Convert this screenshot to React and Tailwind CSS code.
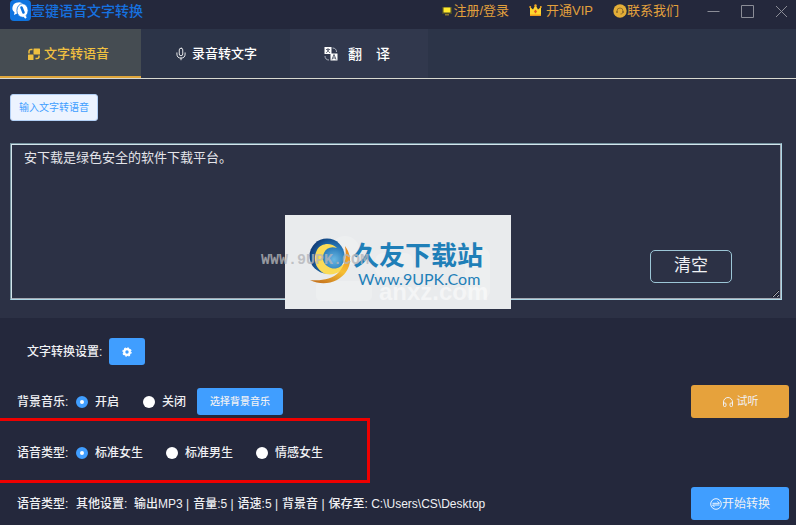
import { useState } from "react";
import { Mic, Headphones } from "lucide-react";

const AppLogo = () => (
  <svg viewBox="0 0 21 21" className="h-[21px] w-[21px]" aria-hidden="true">
    <rect width="21" height="21" rx="4" fill="#0f74e0" />
    <path d="M8 2.500a5.500 5.500 0 0 0-3.500 9.800L4 15l3-1.500h3l3-9.500a5.500 5.500 0 0 0-5-1.500z" fill="#fff" />
    <ellipse
      cx="12.500"
      cy="10.500"
      rx="5.600"
      ry="6.800"
      fill="#fff"
      stroke="#0f74e0"
      strokeWidth="0.800"
    />
    <path d="M11.500 7.500l2 5" stroke="#0f74e0" strokeWidth="2.600" strokeLinecap="round" />
    <path d="M13.500 15l2.500 3" stroke="#fff" strokeWidth="2" />
  </svg>
);

const SpeechIcon = () => (
  <svg viewBox="0 0 12 12" className="h-3 w-3" fill="none" aria-hidden="true">
    <rect x="5.500" y="0.500" width="6.500" height="6" rx="0.500" fill="#f0c040" />
    <rect x="0" y="6.500" width="5.500" height="5.500" rx="0.500" fill="#f0c040" />
    <path
      d="M4.500 1.500H3a2 2 0 0 0-2 2v2M7.500 10.500H9a2 2 0 0 0 2-2V7.500"
      stroke="#f0c040"
      strokeWidth="1.500"
    />
  </svg>
);

const TranslateIcon = () => (
  <svg viewBox="0 0 14 14" className="h-[14px] w-[14px]" aria-hidden="true">
    <path d="M8.500 1c2.600 0 4 1.500 4 4M1 9c0 2.500 1.500 4 4 4" stroke="#aab0bb" fill="none" />
    <rect x="0.500" y="0" width="7" height="7" fill="#fff" />
    <rect x="6.500" y="6.500" width="7" height="7" fill="#fff" />
    <path
      d="M2 2.500h4M4 1v1.500M5.200 2.500L2.200 6M2.800 2.500L6 6"
      stroke="#4b5263"
      strokeWidth="0.800"
    />
    <path d="M8 12.500l2-5 2 5M8.800 11h2.400" stroke="#4b5263" strokeWidth="0.900" fill="none" />
  </svg>
);

const ScreenIcon = () => (
  <svg viewBox="0 0 10 10" className="h-[10px] w-[10px]" aria-hidden="true">
    <rect x="0" y="1" width="10" height="7" fill="#4a4a26" />
    <rect x="1.500" y="1.500" width="7" height="5" fill="#ffe92e" />
    <rect x="3" y="8" width="4" height="1.500" fill="#8e7a30" />
  </svg>
);

const CrownIcon = () => (
  <svg viewBox="0 0 13 13" className="h-[13px] w-[13px]" aria-hidden="true">
    <path d="M1 3l3 2.500L6.500 1 9 5.500 12 3v9H1z" fill="#ffd52e" />
    <path d="M1 10.500h11V12H1z" fill="#f09a1c" />
    <circle cx="6.500" cy="1.500" r="1.200" fill="#f5a623" />
    <circle cx="1.200" cy="3" r="1" fill="#f5a623" />
    <circle cx="11.800" cy="3" r="1" fill="#f5a623" />
    <path d="M6.500 5.500L8 7.500 6.500 9.500 5 7.500z" fill="#e2561f" />
  </svg>
);

const SupportIcon = () => (
  <svg viewBox="0 0 14 14" className="h-[14px] w-[14px]" aria-hidden="true">
    <circle cx="7" cy="7" r="6.700" fill="#e3ae37" />
    <path
      d="M4 7.500V7a3 3 0 0 1 6 0v1c0 1.200-1 2-2.500 2"
      stroke="#8a6a2a"
      strokeWidth="0.900"
      fill="none"
    />
    <path d="M4 7v2M10 7v2" stroke="#8a6a2a" strokeWidth="1.500" />
  </svg>
);

const GearIcon = () => (
  <svg viewBox="0 0 10 10" className="h-[10px] w-[10px]" aria-hidden="true">
    <circle cx="5" cy="5" r="2.800" fill="none" stroke="#fff" strokeWidth="2.200" />
    <circle
      cx="5"
      cy="5"
      r="4.100"
      fill="none"
      stroke="#fff"
      strokeWidth="1.200"
      strokeDasharray="1.700 1.500"
    />
  </svg>
);

const ConvertIcon = () => (
  <svg
    viewBox="0 0 12 12"
    className="h-3 w-3"
    fill="none"
    stroke="#fff"
    strokeWidth="0.900"
    aria-hidden="true"
  >
    <circle cx="6" cy="6" r="5.300" />
    <path d="M2.500 5.300h7L7.500 3.300M9.500 7h-7l2 2" />
  </svg>
);

const WindowIcon = ({ d }) => (
  <svg
    viewBox="0 0 13 13"
    className="h-[13px] w-[13px]"
    fill="none"
    stroke="currentColor"
    aria-hidden="true"
  >
    <path d={d} />
  </svg>
);

const SiteLogo = () => (
  <svg viewBox="0 0 226 94" className="h-full w-full" aria-hidden="true">
    <defs>
      <radialGradient id="globe" cx="0.700" cy="0.600" r="0.750">
        <stop offset="0" stopColor="#6ab8e2" />
        <stop offset="0.500" stopColor="#2577b8" />
        <stop offset="1" stopColor="#0d3570" />
      </radialGradient>
      <linearGradient id="gold" x1="0.800" y1="0" x2="0.300" y2="1">
        <stop offset="0" stopColor="#e8861c" />
        <stop offset="0.550" stopColor="#f6bf34" />
        <stop offset="1" stopColor="#c9781f" />
      </linearGradient>
    </defs>
    <g fill="#fff" opacity="0.200">
      <circle cx="60" cy="36" r="15" />
      <rect x="31" y="66" width="56" height="20" rx="5" />
      <rect x="90" y="38" width="38" height="24" rx="8" />
      <rect x="180" y="32" width="25" height="53" rx="9" />
    </g>
    <circle cx="42" cy="41" r="17.500" fill="url(#globe)" />
    <path
      d="M52 33C46 27 36 28 32 35c-5 9-1 21 9 24 9 2 18-3 20-13-4 6-10 9-15 7-7-2-10-9-7-15 2-5 7-7 13-5z"
      fill="#fadb57"
    />
    <path
      d="M60 31c6 8 7 18 1 26-7 10-22 15-36 8 12 1 22-1 28-7 7-7 9-16 7-27z"
      fill="url(#gold)"
    />
  </svg>
);

const TABS = [
  { id: "speech", label: "文字转语音", icon: <SpeechIcon />, size: "w-[141px] gap-1 pr-1" },
  {
    id: "record",
    label: "录音转文字",
    icon: <Mic size={14} strokeWidth={1.5} />,
    size: "w-[149px] gap-1",
  },
  {
    id: "translate",
    label: "翻\u3000译",
    icon: <TranslateIcon />,
    size: "w-[138px] gap-[10px] bg-[#31384d] pr-1 text-sm",
  },
];

const VOICES = ["标准女生", "标准男生", "情感女生"];

const Radio = ({ name, label, checked, onChange }) => (
  <label className="flex items-center gap-[7px]">
    <input
      type="radio"
      name={name}
      checked={checked}
      onChange={onChange}
      className="h-3 w-3 appearance-none rounded-full border-[#409eff] bg-white checked:border-4"
    />
    {label}
  </label>
);

const App = () => {
  const [tab, setTab] = useState("speech");
  const [text, setText] = useState("安下载是绿色安全的软件下载平台。");
  const [music, setMusic] = useState("开启");
  const [voice, setVoice] = useState("标准女生");

  return (
    <div className="flex min-h-screen flex-col overflow-hidden bg-[#24283c] font-['Liberation_Sans','Noto_Sans_CJK_SC',sans-serif] text-xs text-[#f0f1f4]">
      {/* Title bar */}
      <header className="flex h-[29px] items-start justify-between pr-2 pl-[10px]">
        <div className="flex h-[21px] items-center text-sm font-medium text-[#1672e0]">
          <AppLogo />
          <h1>壹键语音文字转换</h1>
        </div>
        <div className="flex h-[22px] items-center text-[13px] text-[#e2a03c]">
          <nav className="flex items-center gap-5">
            <a href="#login" className="flex items-center gap-px">
              <ScreenIcon />
              注册/登录
            </a>
            <a href="#vip" className="flex items-center gap-1">
              <CrownIcon />
              开通VIP
            </a>
            <a href="#contact" className="flex items-center">
              <SupportIcon />
              联系我们
            </a>
          </nav>
          <div className="ml-7 flex items-center gap-[21px] text-[#8b8d97]">
            <button aria-label="最小化">
              <WindowIcon d="M0.500 6.500h12" />
            </button>
            <button aria-label="最大化">
              <WindowIcon d="M0.500 0.500h12v12h-12z" />
            </button>
            <button aria-label="关闭">
              <WindowIcon d="M1 1l11 11M12 1L1 12" />
            </button>
          </div>
        </div>
      </header>

      {/* Tabs */}
      <nav className="flex h-[50px] border-b border-[#d8d9d0] bg-[#2c3448] text-[13px] font-medium">
        {TABS.map((item) => (
          <button
            key={item.id}
            onClick={() => setTab(item.id)}
            className={`flex items-center justify-center ${item.size} ${
              tab === item.id
                ? "bg-[#454c52] text-[#f0c040] shadow-[inset_0_-2px_0_#e0a63a]"
                : "text-white"
            }`}
          >
            {item.icon}
            <span>{item.label}</span>
          </button>
        ))}
      </nav>

      {/* Text input */}
      <section className="relative bg-[#2c3145] pt-[15px] pr-[14px] pb-[18px] pl-[10px]">
        <button className="flex h-[27px] items-center rounded-[3px] border border-[#b3d0f5] bg-[#ecf3ff] px-2 text-[10px] text-[#409eff]">
          输入文字转语音
        </button>
        <div className="relative mt-[22px] border border-[#add8e6] border-t-[#73909c] border-l-[#73909c]">
          <textarea
            aria-label="输入文字"
            value={text}
            onChange={(e) => setText(e.target.value)}
            className="block h-[155px] w-full border border-[#a3a8b2] border-t-[#d4e6ec] border-l-[#d4e6ec] bg-transparent px-3 py-1 text-[13px] leading-[18px] text-[#e4e5ea] outline-none"
          />
          <button
            onClick={() => setText("")}
            className="absolute right-[49px] bottom-4 h-[33px] w-[82px] rounded-[5px] border border-[#9cc6d6] text-[17px]"
          >
            清空
          </button>
        </div>

        {/* Site banner */}
        <div className="pointer-events-none absolute top-[136px] left-1/2 h-[94px] w-[226px] -translate-x-1/2 bg-[#e9ebed]">
          <SiteLogo />
          <span className="absolute top-[65px] left-[94px] text-[24px] leading-6 font-bold text-white/50">
            anxz.com
          </span>
          <span className="absolute top-[25px] left-[68px] text-[26px] leading-8 font-bold whitespace-nowrap text-[#1f7fb8]">
            久友下载站
          </span>
          <span className="absolute top-[54px] left-[73px] font-['Lato',sans-serif] text-[16px] leading-5 text-[#1f7fb8]">
            Www.9UPK.Com
          </span>
          <span className="absolute top-[37px] -left-6 font-['Liberation_Mono',monospace] text-[15px] leading-[18px] font-bold text-[#b4b5b9]/80">
            WWW.9UPK.COM
          </span>
        </div>
      </section>

      {/* Settings */}
      <main className="flex flex-col pt-5 pr-[7px] font-medium">
        <div className="flex h-[27px] items-center gap-[7px] pl-[27px]">
          <span>文字转换设置:</span>
          <button
            aria-label="设置"
            className="flex h-[27px] w-9 items-center justify-center rounded-[3px] bg-[#409eff]"
          >
            <GearIcon />
          </button>
        </div>

        <div className="mt-5 flex h-[33px] items-center justify-between pl-[17px]">
          <div className="flex items-center">
            <span id="music-label" className="w-[59px]">
              背景音乐:
            </span>
            <div role="radiogroup" aria-labelledby="music-label" className="flex items-center gap-6">
              {["开启", "关闭"].map((label) => (
                <Radio
                  key={label}
                  name="music"
                  label={label}
                  checked={music === label}
                  onChange={() => setMusic(label)}
                />
              ))}
            </div>
            <button className="ml-[11px] h-[27px] w-[86px] rounded-[3px] bg-[#409eff] text-[10px]">
              选择背景音乐
            </button>
          </div>
          <button className="flex h-[33px] w-[98px] items-center justify-center gap-[3px] rounded-[3px] bg-[#e6a23c] text-[11px] font-normal">
            <Headphones size={12} strokeWidth={2} />
            试听
          </button>
        </div>

        <div className="flex h-[65px] w-[370px] items-center border-[3px] border-l-0 border-[#ee0000] pt-1 pl-[17px]">
          <span id="voice-label" className="w-[59px]">
            语音类型:
          </span>
          <div
            role="radiogroup"
            aria-labelledby="voice-label"
            className="flex items-center gap-[23px]"
          >
            {VOICES.map((label) => (
              <Radio
                key={label}
                name="voice"
                label={label}
                checked={voice === label}
                onChange={() => setVoice(label)}
              />
            ))}
          </div>
        </div>

        <div className="mt-1 mb-[5px] flex h-[33px] items-center justify-between pl-[17px]">
          <p className="flex items-center">
            <span className="w-[59px]">语音类型:</span>
            <span className="w-[58px]">其他设置:</span>
            <span className="flex gap-1">
              <span>输出MP3 |</span>
              <span>音量:5 |</span>
              <span>语速:5 |</span>
              <span>背景音 |</span>
              <span>保存至: C:\Users\CS\Desktop</span>
            </span>
          </p>
          <button className="flex h-[33px] w-[98px] items-center justify-center rounded-[3px] bg-[#409eff] text-xs font-normal">
            <ConvertIcon />
            开始转换
          </button>
        </div>
      </main>
    </div>
  );
};

export default App;
